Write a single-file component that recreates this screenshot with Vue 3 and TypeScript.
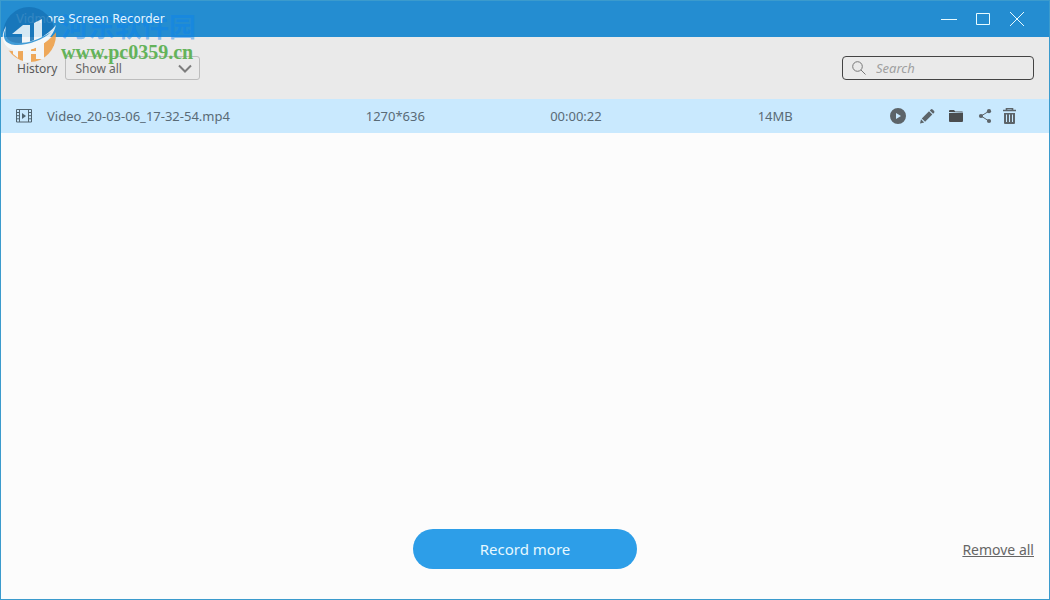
<script setup lang="ts">
import { computed, ref } from 'vue'

interface Recording {
  name: string
  resolution: string
  duration: string
  size: string
}

const filter = ref('all')
const query = ref('')
const recordings = ref<Recording[]>([
  { name: 'Video_20-03-06_17-32-54.mp4', resolution: '1270*636', duration: '00:00:22', size: '14MB' },
])

const visible = computed(() =>
  recordings.value.filter((r) => r.name.toLowerCase().includes(query.value.toLowerCase())),
)

function remove(item: Recording) {
  recordings.value = recordings.value.filter((r) => r !== item)
}
</script>

<template>
  <div class="window">
    <header class="titlebar">
      <h1 class="title">Vidmore Screen Recorder</h1>
      <div class="window-controls">
        <button type="button" aria-label="Minimize">
          <svg width="16" height="16" viewBox="0 0 16 16"><path d="M0 8.5h16" /></svg>
        </button>
        <button type="button" aria-label="Maximize">
          <svg width="16" height="16" viewBox="0 0 16 16"><path d="M1.5 2.5h13v11h-13z" /></svg>
        </button>
        <button type="button" aria-label="Close">
          <svg width="16" height="16" viewBox="0 0 16 16"><path d="M1 1l14 14M15 1L1 15" /></svg>
        </button>
      </div>
    </header>

    <div class="toolbar">
      <label for="filter">History</label>
      <div class="select-box">
        <select id="filter" v-model="filter">
          <option value="all">Show all</option>
        </select>
        <svg class="chevron" width="16" height="10" viewBox="0 0 16 10"><path d="M2 1.5l6 6 6-6" /></svg>
      </div>
      <div class="search">
        <svg width="14" height="14" viewBox="0 0 14 14"><circle cx="5.5" cy="5.5" r="4.8" /><path d="M9 9l4.5 4.5" /></svg>
        <input v-model="query" type="text" placeholder="Search" aria-label="Search" />
      </div>
    </div>

    <main class="content">
      <table class="recordings">
        <colgroup>
          <col class="col-name" />
          <col class="col-resolution" />
          <col class="col-duration" />
          <col class="col-size" />
          <col />
        </colgroup>
        <tbody>
          <tr v-for="item in visible" :key="item.name">
            <td>
              <div class="file">
                <svg width="16" height="14" viewBox="0 0 16 14">
                  <path d="M0.5 0.5h15v12.5h-15zM3.5 0.5v12.5M12.5 0.5v12.5M0.5 3.5h3M0.5 6.7h3M0.5 9.8h3M12.5 3.5h3M12.5 6.7h3M12.5 9.8h3" fill="none" stroke="#526570" />
                  <path d="M6 4v6l4-3z" fill="#526570" />
                </svg>
                <span>{{ item.name }}</span>
              </div>
            </td>
            <td>{{ item.resolution }}</td>
            <td>{{ item.duration }}</td>
            <td>{{ item.size }}</td>
            <td>
              <div class="actions">
                <button type="button" aria-label="Play">
                  <svg width="16" height="16" viewBox="0 0 16 16"><path fill-rule="evenodd" d="M8 0a8 8 0 1 0 0 16A8 8 0 0 0 8 0zM6 4.9v6.2L11 8z" /></svg>
                </button>
                <button type="button" aria-label="Rename">
                  <svg width="16" height="16" viewBox="0 0 16 16"><path d="M1 15.5l1-4.2 3.2 3.2zM2.8 10.4L10 3.2l3.3 3.3-7.2 7.2zM10.8 2.4l1-1q.9-.8 1.8 0l1.5 1.5q.8.9 0 1.8l-1 1z" /></svg>
                </button>
                <button type="button" class="folder" aria-label="Open folder">
                  <svg width="16" height="16" viewBox="0 0 16 16"><path d="M1 4V3q0-1 1-1h4l1.3 1.5H14q1 0 1 .9zM1 5h14v8q0 1-1 1H2q-1 0-1-1z" /></svg>
                </button>
                <button type="button" aria-label="Share">
                  <svg width="16" height="16" viewBox="0 0 16 16"><path d="M12 3.200L4 8l8 5" fill="none" stroke="#5c6469" /><circle cx="12" cy="3.2" r="2.1" /><circle cx="4" cy="8" r="2.1" /><circle cx="12" cy="13" r="2.1" /></svg>
                </button>
                <button type="button" class="trash" aria-label="Delete" @click="remove(item)">
                  <svg width="16" height="16" viewBox="0 0 16 16"><path d="M5.5 2V.5h6V2M2 2.5h13" fill="none" stroke="#5c6469" stroke-width="1.6" /><path fill-rule="evenodd" d="M3 5h11v10q0 1-1 1H4q-1 0-1-1zM5 6.5V14h1V6.5zM8 6.5V14h1V6.5zM11 6.5V14h1V6.5z" /></svg>
                </button>
              </div>
            </td>
          </tr>
        </tbody>
      </table>
    </main>

    <footer class="footer">
      <button type="button" class="record">Record more</button>
      <a href="#" class="remove-all" @click.prevent="recordings = []">Remove all</a>
    </footer>

    <div class="watermark">
      <svg class="watermark-logo" width="58" height="62" viewBox="0 0 58 62">
        <defs>
          <clipPath id="upper"><path d="M0 0h58v23C46 36 28 44 8 42L0 34z" /></clipPath>
          <clipPath id="lower"><path d="M0 62V48C24 55 46 46 58 27v35z" /></clipPath>
        </defs>
        <ellipse cx="28" cy="33" rx="26" ry="27" fill="#1674b8" clip-path="url(#upper)" />
        <ellipse cx="29" cy="34" rx="26" ry="27" fill="#ef9d42" clip-path="url(#lower)" />
        <g fill="#f4f8fa">
          <path d="M11 33l11-9h7v19h-8V33zM33 22l8-4v19l-8 3z" />
          <path d="M12 48h5v9l-5-4zM22 46h8v15h-8zM35 42h8v16h-8zM30 50h5v3h-5z" />
        </g>
        <path d="M5 25C-3 39 4 50 20 50 38 49 51 39 55 24 46 35 32 43 18 43 5 43 3 35 5 25z" fill="#f8fbfc" />
        <path d="M4 29c-3 8 0 14 10 15C25 45 42 39 50 31 38 39 27 42 18 42 8 42 4 37 4 29z" fill="#248fd4" />
      </svg>
      <div class="watermark-text">
        <span class="watermark-name">河东软件园</span>
        <span class="watermark-url">www.pc0359.cn</span>
      </div>
    </div>
  </div>
</template>

<style>
body {
  margin: 0;
}
</style>

<style scoped>
.window {
  position: relative;
  display: flex;
  flex-direction: column;
  box-sizing: border-box;
  min-height: 100vh;
  border: 1px solid #3b9bcd;
  background: #fcfcfc;
  color: #595959;
  font: 12px/16px "Noto Sans", "Noto Sans CJK SC", sans-serif;
}
button {
  padding: 0;
  border: 0;
  background: none;
  font: inherit;
  cursor: pointer;
}
svg {
  display: block;
}
.titlebar {
  display: flex;
  align-items: center;
  justify-content: space-between;
  height: 36px;
  padding: 0 24px 0 15px;
  background: #248dd1;
}
.title {
  position: relative;
  z-index: 2;
  margin: 0;
  color: #e3f5ff;
  font: 400 13px/16px "DejaVu Sans Condensed", "DejaVu Sans", sans-serif;
}
.window-controls {
  display: flex;
  gap: 18px;
}
.window-controls svg {
  fill: none;
  stroke: #e8fbff;
}
.toolbar {
  display: flex;
  align-items: center;
  height: 62px;
  padding: 0 15px 0 16px;
  background: #eaeaea;
}
.toolbar label {
  padding-top: 2px;
}
.select-box {
  position: relative;
  margin-left: 8px;
}
select {
  display: block;
  box-sizing: border-box;
  width: 135px;
  height: 24px;
  padding: 1px 28px 0 9px;
  border: 1px solid #bdbdbd;
  border-radius: 3px;
  appearance: none;
  background: #eaeaea;
  color: #666;
  font: inherit;
}
.chevron {
  position: absolute;
  top: 8px;
  right: 7px;
  fill: none;
  stroke: #7d7d7d;
  stroke-width: 2;
  pointer-events: none;
}
.search {
  display: flex;
  align-items: center;
  gap: 10px;
  box-sizing: border-box;
  width: 192px;
  height: 24px;
  margin-left: auto;
  padding: 0 9px;
  border: 1px solid #444;
  border-radius: 4px;
}
.search svg {
  flex: none;
  fill: none;
  stroke: #777;
}
.search input {
  flex: 1;
  min-width: 0;
  padding: 0;
  border: 0;
  outline: 0;
  background: none;
  color: #595959;
  font: inherit;
  font-size: 13px;
}
.search input::placeholder {
  color: #a0a0a0;
  font-style: italic;
  opacity: 1;
}
.content {
  flex: 1;
}
.recordings {
  width: 100%;
  border-collapse: collapse;
  table-layout: fixed;
  background: #c9e9fe;
  color: #596b76;
  font-size: 13px;
}
.col-name {
  width: 34.8%;
}
.col-resolution {
  width: 17.6%;
}
.col-duration {
  width: 19.8%;
}
.col-size {
  width: 12.6%;
}
.recordings td {
  height: 34px;
  padding: 0;
}
.file {
  display: flex;
  align-items: center;
  gap: 15px;
  padding-left: 15px;
}
.actions {
  display: flex;
  gap: 13px;
}
.actions svg {
  fill: #5c6469;
}
.actions .folder svg {
  fill: #4a4d4f;
}
.actions .trash {
  margin-left: -5px;
}
.footer {
  display: grid;
  grid-template-columns: 1fr auto 1fr;
  align-items: center;
  padding: 0 15px 30px;
}
.record {
  grid-column: 2;
  width: 224px;
  height: 40px;
  border-radius: 20px;
  background: #2d9ee8;
  color: #e6f8ff;
  font-size: 15px;
}
.remove-all {
  justify-self: end;
  padding-top: 2px;
  color: #666;
  font-size: 14px;
}
.watermark {
  position: absolute;
  top: 0;
  left: 0;
  display: flex;
  gap: 2px;
  pointer-events: none;
}
.watermark-logo {
  z-index: 3;
  opacity: 0.85;
}
.watermark-text {
  z-index: 1;
  display: flex;
  flex-direction: column;
  padding-top: 9px;
}
.watermark-name {
  color: rgba(10, 130, 240, 0.45);
  font: 700 27px/32px "Noto Sans CJK SC", sans-serif;
}
.watermark-url {
  color: #64b35a;
  font: 700 20px/20px "Liberation Serif", serif;
}
</style>
